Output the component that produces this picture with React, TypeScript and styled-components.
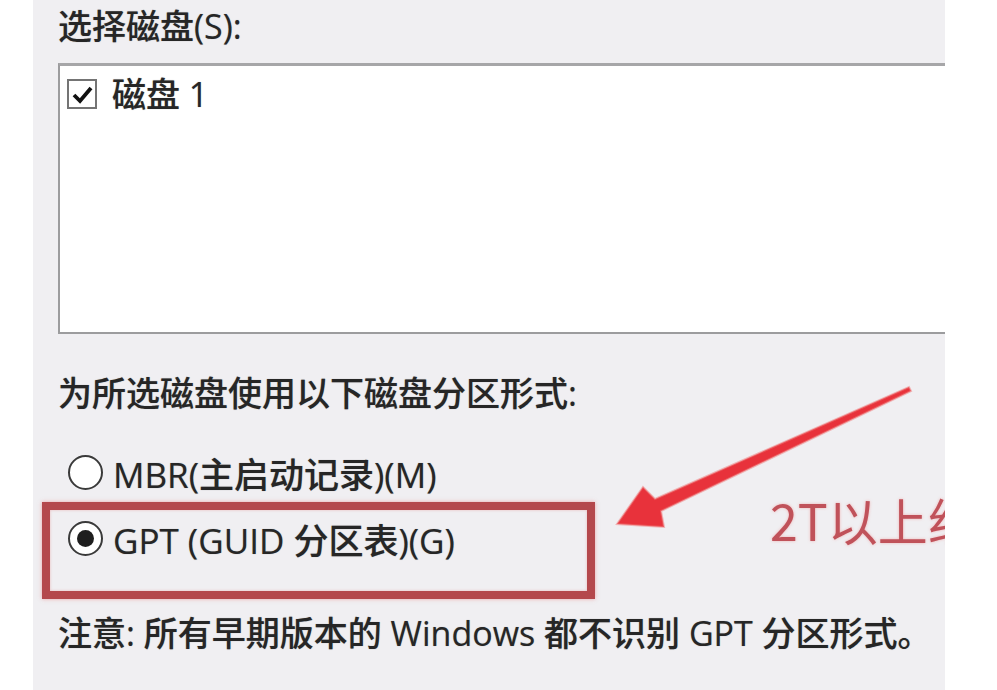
import React from "react";
import styled, { createGlobalStyle } from "styled-components";

const Global = createGlobalStyle`
  html, body { margin: 0; padding: 0; background: #ffffff; }
  body { font-family: "Open Sans", "Noto Sans CJK SC", sans-serif; }
`;

const Page = styled.div`
  width: 997px;
  height: 690px;
  background: #ffffff;
  overflow: hidden;
`;

const Panel = styled.div`
  position: relative;
  margin-left: 33px;
  width: 912px;
  height: 690px;
  box-sizing: border-box;
  padding: 6px 0 0 25px;
  background: #f0eff2;
  overflow: hidden;
  display: flex;
  flex-direction: column;
  color: #262626;
  font-family: "Open Sans", "Noto Sans CJK SC", sans-serif;
  font-size: 34px;
  font-weight: 500;
  text-shadow: 0 0 1px rgba(0, 0, 0, 0.35);
`;

const Label = styled.div<{ $mt?: number }>`
  line-height: 40px;
  height: 40px;
  margin-top: ${(p) => p.$mt ?? 0}px;
  white-space: nowrap;
`;

const ListBox = styled.div`
  margin-top: 17px;
  height: 271px;
  box-sizing: border-box;
  background: #ffffff;
  border-top: 3px solid #a6a6a8;
  border-left: 2px solid #9c9c9e;
  border-bottom: 2px solid #9c9c9e;
  padding: 11px 0 0 7px;
`;

const CheckRow = styled.div`
  display: flex;
  align-items: center;
  gap: 15px;
  height: 34px;
  line-height: 34px;
  font-size: 34px;
`;

const CheckBox = styled.span`
  width: 30px;
  height: 30px;
  box-sizing: border-box;
  border: 2px solid #747474;
  background: #ffffff;
  display: flex;
  align-items: center;
  justify-content: center;
  flex: none;
`;

const RadioRow = styled.div<{ $ml?: number; $mt?: number }>`
  display: flex;
  align-items: center;
  gap: 10px;
  height: 40px;
  margin-left: ${(p) => p.$ml ?? 0}px;
  margin-top: ${(p) => p.$mt ?? 0}px;
  white-space: nowrap;
  font-size: 35px;
`;

const Radio = styled.span<{ $on?: boolean }>`
  width: 35px;
  height: 35px;
  box-sizing: border-box;
  border-radius: 50%;
  border: 2px solid #3a3a3a;
  background: #ffffff;
  display: flex;
  align-items: center;
  justify-content: center;
  flex: none;
  &::after {
    content: "";
    display: ${(p) => (p.$on ? "block" : "none")};
    width: 17px;
    height: 17px;
    border-radius: 50%;
    background: #1e1e1e;
  }
`;

const Highlight = styled.div`
  margin: 10px 0 0 -16px;
  width: 553px;
  height: 97px;
  box-sizing: border-box;
  border: 8px solid #b4484c;
  box-shadow: 0 0 4px rgba(230, 110, 110, 0.55), inset 0 0 3px rgba(230, 110, 110, 0.4);
  padding: 8px 0 0 18px;
`;

const Note = styled.div`
  margin-top: 14px;
  line-height: 40px;
  height: 40px;
  white-space: nowrap;
  font-size: 34px;
`;

const Callout = styled.div`
  position: absolute;
  left: 737px;
  top: 489px;
  font-family: "Noto Sans CJK SC", sans-serif;
  font-size: 50px;
  font-weight: 400;
  line-height: 60px;
  color: #c0525a;
  white-space: nowrap;
  text-shadow: 0 0 3px rgba(240, 150, 150, 0.7);
`;

const ArrowSvg = styled.svg`
  position: absolute;
  left: -33px;
  top: 0;
  pointer-events: none;
`;

export default function App() {
  return (
    <Page>
      <Global />
      <Panel>
        <Label>选择磁盘(S):</Label>
        <ListBox>
          <CheckRow>
            <CheckBox>
              <svg width="21" height="19" viewBox="0 0 21 19">
                <path d="M2 10 L8 16 L19 3" fill="none" stroke="#111" strokeWidth="3.8" />
              </svg>
            </CheckBox>
            <span>磁盘 1</span>
          </CheckRow>
        </ListBox>
        <Label $mt={39}>为所选磁盘使用以下磁盘分区形式:</Label>
        <RadioRow $ml={10} $mt={39}>
          <Radio />
          <span>MBR(主启动记录)(M)</span>
        </RadioRow>
        <Highlight>
          <RadioRow>
            <Radio $on />
            <span>GPT (GUID 分区表)(G)</span>
          </RadioRow>
        </Highlight>
        <Note>注意: 所有早期版本的 Windows 都不识别 GPT 分区形式。</Note>
        <Callout>2T以上组</Callout>
        <ArrowSvg width="997" height="690" viewBox="0 0 997 690">
          <polygon
            points="617,524 643,487 655,499 909,387 911,391 661,511 664,527"
            fill="#e8323b"
            stroke="rgba(240,120,120,0.5)"
            strokeWidth="2"
          />
        </ArrowSvg>
      </Panel>
    </Page>
  );
}
